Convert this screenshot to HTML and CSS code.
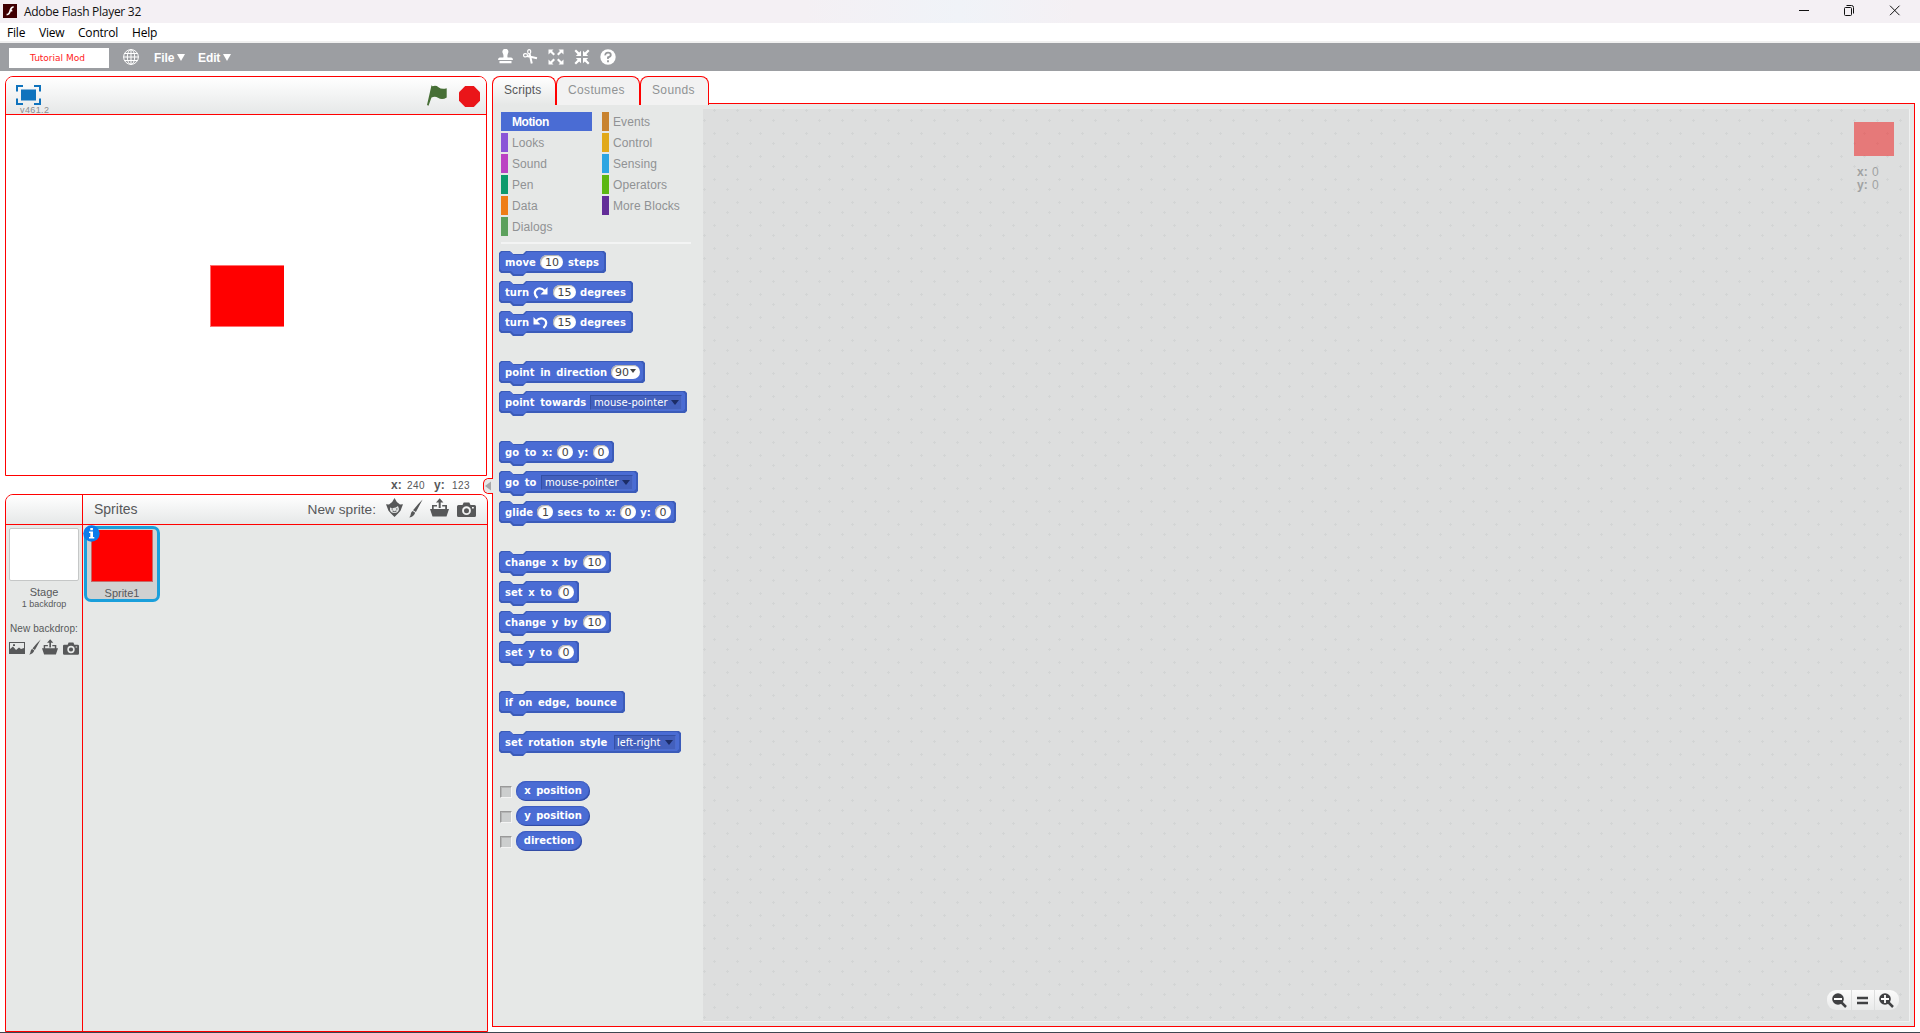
FILE: index.html
```html
<!DOCTYPE html>
<html lang="en">
<head>
<meta charset="utf-8">
<title>Adobe Flash Player 32</title>
<link rel="stylesheet" href="styles.css">
</head>
<body>
<svg class="defs" width="0" height="0" aria-hidden="true">
  <symbol id="brush" viewBox="0 0 14 19"><path d="M13.6.6 6.9 13 4.1 11.200Q9 5 13.6.6ZM3.7 12l2.500 1.700Q4.800 17.800.3 18.600 1.800 16.500 1.900 14.600 2.200 12.600 3.700 12Z"/></symbol>
  <symbol id="upload" viewBox="0 0 19 19"><path d="M2 16.500V7h5v1.600H3.700V11h11.500V8.600h-3V7H17v4h2l-2.500 7.500H2.500L0 11h2ZM8.700 10V4.500H6L9.700.3l3.700 4.200h-2.700V10Z"/></symbol>
  <symbol id="camera" viewBox="0 0 19 15"><path fill-rule="evenodd" d="M1.500 3h4l1.200-2.500h5.600L13.500 3h4Q19 3 19 4.500v9Q19 15 17.500 15h-16Q0 15 0 13.500v-9Q0 3 1.500 3ZM9.500 4.300a4.400 4.400 0 1 0 0 8.800 4.400 4.400 0 0 0 0-8.800Zm0 1.900a2.500 2.500 0 1 1 0 5 2.500 2.500 0 0 1 0-5ZM15 5h1.800v1.400H15Z"/></symbol>
</svg>

<header class="titlebar">
  <svg class="app-icon" width="14" height="14" viewBox="0 0 14 14"><rect width="14" height="14" fill="#400002"/><path d="M10.700 3Q8.200 2.800 7.300 6.400 6.300 10.600 3.600 10.700M6.500 6.600H9.300" fill="none" stroke="#fff" stroke-width="1.700"/></svg>
  <span class="app-title">Adobe Flash Player 32</span>
  <svg class="window-buttons" width="102" height="12" viewBox="0 0 102 12" fill="none" stroke="#111">
    <path d="M0 5.500h10"/><rect x="45.500" y="2.500" width="7" height="8" rx="1"/><path d="M47.500.5h5q2 0 2 2v6M91 .7l9.500 9.500M100.500.7 91 10.200"/>
  </svg>
</header>
<nav class="menubar"><span class="m1">File</span><span class="m2">View</span><span class="m3">Control</span><span class="m4">Help</span></nav>
<div class="toolbar">
  <div class="logo"><span>Tutorial Mod</span></div>
  <svg class="globe" width="16" height="16" viewBox="0 0 16 16" fill="none" stroke="#fff"><circle cx="8" cy="8" r="7.400"/><ellipse cx="8" cy="8" rx="3.700" ry="7.400"/><path d="M8 .6v14.800M.6 8h14.800M1.700 4.500h12.600M1.700 11.500h12.600"/></svg>
  <span class="tool-menu file">File<i></i></span>
  <span class="tool-menu edit">Edit<i></i></span>
  <div class="tools">
    <svg width="15" height="16" viewBox="0 0 15 16" fill="#fff"><path d="M5.300 8.600Q5.900 6.400 4.800 4.200A3 3 0 1 1 10 4.200Q9 6.400 9.600 8.600h3.600Q15 9 15 11H0Q0 9 1.700 8.600ZM1.500 12h12v2.300h-12Z"/></svg>
    <svg width="15" height="16" viewBox="0 0 15 16" fill="none" stroke="#fff"><ellipse cx="2.500" cy="6.300" rx="2" ry="1.600" stroke-width="1.200"/><ellipse cx="6.200" cy="2.700" rx="1.500" ry="2.100" stroke-width="1.200"/><path d="M4 7 14 9.300M6.600 4.600 8.800 14.500" stroke-width="2"/></svg>
    <svg width="16" height="16" viewBox="0 0 16 16"><path d="M.5.5h5L4 2l3 3-1.500 1.500-3-3L.5 5.500ZM15.500.5v5l-2-2-3 3L9 5l3-3L10.500.5ZM.5 15.500v-5l2 2 3-3L7 11l-3 3 1.500 1.500ZM15.500 15.500h-5L12 14l-3-3 1.500-1.500 3 3 2-2Z" fill="#fff"/></svg>
    <svg width="16" height="16" viewBox="0 0 16 16"><path d="M7 1.800V7H1.800l1.800-1.800L.5 2 2 .5l3.200 3.100ZM9 1.800V7h5.200l-1.800-1.800L15.500 2 14 .5l-3.200 3.100ZM7 14.200V9H1.800l1.800 1.800L.5 14 2 15.500l3.200-3.100ZM9 14.200V9h5.200l-1.800 1.800 3.100 3.200-1.500 1.500-3.200-3.100Z" fill="#fff"/></svg>
    <svg width="16" height="16" viewBox="0 0 16 16"><circle cx="8" cy="8" r="7.700" fill="#fff"/><path d="M5.300 6.400Q5.100 3.700 8 3.700q2.800 0 2.800 2.200Q10.800 7.500 8 8.300V10M8 11.200v2" fill="none" stroke="#96989b" stroke-width="1.800"/></svg>
  </div>
</div>

<main class="workspace">
  <section class="left">
    <div class="stage">
      <div class="stage-head">
        <svg class="fullscreen" width="25" height="20" viewBox="0 0 25 20"><path d="M1 6.500V1h6M18 1h6v5.500M24 13.500V19h-6M7 19H1v-5.500" fill="none" stroke="#0f73bd" stroke-width="2"/><rect x="5" y="4.500" width="15" height="11" fill="#0f73bd"/></svg>
        <span class="version">v461.2</span>
        <svg class="flag" width="20" height="21" viewBox="0 0 20 21"><path d="M5.500 1.300Q9 0 11.500 2.200 14.500 4.700 19.700 3.200V12.500Q15 15.400 11 12.700 8 10.700 4.500 12.500L1.500 20.700 0 20 4.500.3Z" fill="#476f36"/></svg>
        <svg class="stop" width="21" height="21" viewBox="0 0 21 21"><path d="M6.200 0h8.600L21 6.200v8.600L14.800 21H6.200L0 14.800V6.200Z" fill="#ea1519"/></svg>
      </div>
      <div class="stage-canvas"><div class="sprite"></div></div>
    </div>
    <div class="readout"><b>x:</b><span>240</span><b class="ry">y:</b><span>123</span></div>
    <div class="sprite-panel">
      <div class="panel-head">
        <div class="head-stage"></div>
        <div class="head-sprites">
          <span class="sprites-title">Sprites</span><span class="new-sprite">New sprite:</span>
          <svg class="imp" width="17" height="19" viewBox="0 0 17 19"><path fill="#575859" d="M8.500 0Q10 4 14 6.500L17 6.200 14.500 12.800 11.800 15.700 8.500 19l-3.300-3.300-2.700-2.900L0 6.200l3 .3Q7 4 8.500 0Z"/><path fill="#e4e6e6" d="M4 9.500q5 1.500 8-1.500l1 3q-.5 4-4.500 4T4 12Z"/><path d="M5.500 11h1.500m3 0h1.500M6.500 13q2 1.200 4 0" stroke="#575859" fill="none"/></svg>
          <svg class="h-brush" width="14" height="19"><use href="#brush"/></svg>
          <svg class="h-upload" width="19" height="19"><use href="#upload"/></svg>
          <svg class="h-camera" width="19" height="15"><use href="#camera"/></svg>
        </div>
      </div>
      <div class="panel-body">
        <aside class="stage-info">
          <div class="backdrop-thumb"></div>
          <span class="stage-name">Stage</span>
          <span class="backdrop-count">1 backdrop</span>
          <span class="new-backdrop">New backdrop:</span>
          <div class="backdrop-tools">
            <svg class="b-image" width="16" height="12" viewBox="0 0 16 12"><path fill-rule="evenodd" d="M0 0h16v12H0ZM1 1v6l3-2.500L7 8l3-2.500 2 1.500 3-1V1Zm3 1.200h2V4H4Z"/></svg>
            <svg class="b-brush" width="12" height="16" viewBox="0 0 14 19" preserveAspectRatio="none"><use href="#brush" width="14" height="19"/></svg>
            <svg class="b-upload" width="16" height="16"><use href="#upload"/></svg>
            <svg class="b-camera" width="16" height="13"><use href="#camera"/></svg>
          </div>
        </aside>
        <div class="sprite-list">
          <div class="sprite-card">
            <div class="sprite-thumb"></div><span>Sprite1</span>
            <svg class="info" width="17" height="17" viewBox="0 0 17 17"><circle cx="8.500" cy="8.500" r="8.200" fill="#0a7bea"/><path d="M7.300 3h2.600v2.200H7.300ZM6 6.500h4V12h1.300v1.500H6V12h1.300V8H6Z" fill="#fff"/></svg>
          </div>
        </div>
      </div>
    </div>
    <svg class="collapse" width="10" height="16" viewBox="0 0 10 16"><path d="M10 .5H4.500Q.5 1.500.5 5v6q0 3.500 4 4.500H10" fill="#e6e8e8" stroke="#f00"/><path d="M8 3.500v9L2 8Z" fill="#a5a7a9"/></svg>
  </section>

  <section class="editor">
    <div class="tabs"><div class="tab active">Scripts</div><div class="tab costumes">Costumes</div><div class="tab sounds">Sounds</div></div>
    <div class="editor-body">
      <aside class="palette">
        <div class="categories">
          <div class="cat motion">Motion</div><div class="cat events">Events</div>
          <div class="cat looks">Looks</div><div class="cat control">Control</div>
          <div class="cat sound">Sound</div><div class="cat sensing">Sensing</div>
          <div class="cat pen">Pen</div><div class="cat operators">Operators</div>
          <div class="cat data">Data</div><div class="cat more">More Blocks</div>
          <div class="cat dialogs">Dialogs</div>
        </div>
        <div class="blocks">
          <div class="block w107"><span>move</span><em class="two">10</em><span>steps</span></div>
          <div class="block w134"><span>turn</span><svg width="16" height="13" viewBox="0 0 16 13"><path d="M4.500 12Q0 7.500 3 4 7 .5 12 5" fill="none" stroke="#fff" stroke-width="2.200"/><path d="M14.500 1v7.500H7.500Z" fill="#fff"/></svg><em class="two">15</em><span>degrees</span></div>
          <div class="block w134"><span>turn</span><svg width="16" height="13" viewBox="0 0 16 13"><path d="M10.500 12Q15 7.500 12 4 8 .5 3 5" fill="none" stroke="#fff" stroke-width="2.200"/><path d="M.5 1v7.500h7Z" fill="#fff"/></svg><em class="two">15</em><span>degrees</span></div>
          <div class="block w146 gap"><span>point in direction</span><em class="angle">90<i></i></em></div>
          <div class="block w188"><span>point towards</span><strong class="drop pointer">mouse-pointer<i></i></strong></div>
          <div class="block w115 gap"><span>go to x:</span><em>0</em><span>y:</span><em>0</em></div>
          <div class="block w139"><span>go to</span><strong class="drop pointer">mouse-pointer<i></i></strong></div>
          <div class="block w177"><span>glide</span><em>1</em><span>secs to x:</span><em>0</em><span>y:</span><em>0</em></div>
          <div class="block w112 gap"><span>change x by</span><em class="two">10</em></div>
          <div class="block w80"><span>set x to</span><em>0</em></div>
          <div class="block w112"><span>change y by</span><em class="two">10</em></div>
          <div class="block w80"><span>set y to</span><em>0</em></div>
          <div class="block w126 gap"><span>if on edge, bounce</span></div>
          <div class="block w182 smallgap"><span>set rotation style</span><strong class="drop style">left-right<i></i></strong></div>
        </div>
        <div class="reporters">
          <div class="row"><i class="check"></i><span class="reporter">x position</span></div>
          <div class="row"><i class="check"></i><span class="reporter">y position</span></div>
          <div class="row"><i class="check"></i><span class="reporter dir">direction</span></div>
        </div>
      </aside>
      <div class="scripts">
        <svg class="grid" width="100%" height="100%"><defs><pattern id="plus" width="23" height="23" patternUnits="userSpaceOnUse"><path d="M0 11.500h3M1.500 10v3M10 1.500h3M11.500 0v3" stroke="#d3d5d5"/></pattern></defs><rect width="100%" height="100%" fill="url(#plus)"/></svg>
        <div class="watermark"><div class="mini-sprite"></div><div class="coords"><b>x:</b><span>0</span><b>y:</b><span>0</span></div></div>
        <div class="zoom-bar">
          <span><svg width="15" height="15" viewBox="0 0 15 15"><circle cx="6" cy="6" r="5.800" fill="#404143"/><path d="m9 9 5 5" stroke="#404143" stroke-width="2.500"/><path d="M2 6h8" stroke="#fff" stroke-width="1.800"/></svg></span>
          <span><svg width="11" height="15" viewBox="0 0 11 15"><path d="M0 5h11M0 10h11" stroke="#404143" stroke-width="2.600"/></svg></span>
          <span><svg width="15" height="15" viewBox="0 0 15 15"><circle cx="6" cy="6" r="5.800" fill="#404143"/><path d="m9 9 5 5" stroke="#404143" stroke-width="2.500"/><path d="M2 6h8M6 2v8" stroke="#fff" stroke-width="1.800"/></svg></span>
        </div>
      </div>
    </div>
  </section>
</main>
</body>
</html>
```
FILE: styles.css
```css
* { box-sizing: border-box; }
body { margin: 0; width: 1920px; height: 1033px; overflow: hidden; background: #fff; border-bottom: 1px solid #3c4650; font: 12px "Liberation Sans", Arial, sans-serif; color: #57585a; display: flex; flex-direction: column; }
svg { display: block; flex: none; }
.defs { position: absolute; }
span, b { white-space: nowrap; }

.titlebar { height: 23px; flex: none; background: linear-gradient(90deg, #f4f0f4 42%, #f0f3f8 50%, #f4f0f4 56%); display: flex; align-items: center; padding: 0 21px 2px 3px; font-family: "Open Sans", "Noto Sans", sans-serif; color: #111; }
.app-title { margin: 2px auto 0 7px; letter-spacing: -.28px; }
.window-buttons { margin: 0 -2px 0 0; }
.menubar { height: 20px; flex: none; border-bottom: 2px solid #f0f0f0; display: flex; padding-left: 7px; line-height: 20px; font-family: "Open Sans", "Noto Sans", sans-serif; color: #000; }
.m1 { width: 32px; } .m2 { width: 39px; } .m3 { width: 54px; }
.m1, .m2, .m3, .m4 { letter-spacing: -.2px; }
.toolbar { height: 28px; flex: none; background: #9c9ea2; display: flex; align-items: center; padding-left: 9px; color: #fff; font-weight: bold; }
.logo { width: 100px; height: 20px; margin-top: 1px; background: #fff; color: #f22; font: 9px/20px "DejaVu Sans", sans-serif; padding-left: 21px; }
.globe { margin: 0 15px 0 14px; }
.tool-menu { margin-top: 1px; }
.tool-menu i { display: inline-block; border: 4px solid transparent; border-top: 7px solid #fff; border-bottom: 0; margin-left: 3px; vertical-align: 1px; }
.file { width: 44px; letter-spacing: -.1px; } .edit { width: 299px; letter-spacing: -.1px; }
.tools { display: flex; gap: 10px; margin-left: 1px; }

.workspace { display: flex; flex: 1; padding: 5px 0 0 5px; }
.left { width: 487px; position: relative; flex: none; }
.stage { width: 482px; height: 400px; border: 1px solid #f00; border-radius: 8px 8px 0 0; overflow: hidden; }
.stage-head { height: 38px; border-bottom: 1px solid #f00; background: linear-gradient(#fff, #e6e8e8); display: flex; position: relative; padding: 8px 6px 0 10px; }
.version { position: absolute; left: 14px; top: 28px; font-size: 9px; line-height: 11px; letter-spacing: .4px; color: #8b8d8f; }
.flag { margin: 0 12px 0 auto; }
.stop { margin-top: 1px; }
.stage-canvas { height: 360px; padding: 150px 0 0 204px; }
.sprite { width: 74px; height: 62px; background: #f00; border: 1px solid #ff7070; border-right: 0; }
.readout { height: 18px; display: flex; align-items: center; padding: 0 0 0 386px; font-size: 11px; }
.readout b { width: 16px; font-size: 12px; } .readout span { width: 27px; font-size: 10px; letter-spacing: .4px; padding-top: 1px; }
.readout .ry { width: 18px; }
.sprite-panel { width: 483px; height: 538px; border: 1px solid #f00; border-radius: 8px 8px 0 0; overflow: hidden; background: #e6e8e7; display: flex; flex-direction: column; }
.panel-head { height: 30px; display: flex; border-bottom: 1px solid #f00; background: linear-gradient(#fff, #e6e8e8); }
.head-stage { width: 77px; border-right: 1px solid #f00; }
.head-sprites { flex: 1; display: flex; padding: 4px 9px 0 11px; fill: #575859; font-size: 14px; line-height: 20px; }
.sprites-title { margin-right: auto; }
.new-sprite { margin: 1px 10px 0 0; font-size: 13.700px; }
.imp { margin-top: -1px; }
.h-brush { margin: 0 7px 0 6px; } .h-upload { margin: -1px 8px 0 0; } .h-camera { margin-top: 3px; margin-right: 2px; }
.panel-body { flex: 1; display: flex; }
.stage-info { width: 77px; border-right: 1px solid #f00; display: flex; flex-direction: column; align-items: center; padding-top: 3px; }
.backdrop-thumb { width: 70px; height: 53px; background: #fff; border: 1px solid #c5c7c7; border-radius: 2px; }
.stage-name { margin-top: 5px; line-height: 13px; font-size: 11px; }
.backdrop-count { font-size: 9px; line-height: 10px; }
.new-backdrop { margin-top: 14px; font-size: 10px; line-height: 12px; letter-spacing: .1px; }
.backdrop-tools { display: flex; fill: #575859; margin: 4px 0 0 0; width: 70px; align-items: center; }
.b-image { margin-top: 1px; } .b-brush { margin: 0 1px 0 4px; } .b-camera { margin: 2px 0 0 5px; }
.sprite-list { padding: 1px; }
.sprite-card { position: relative; width: 76px; height: 76px; border: 3px solid #1a9fdb; border-radius: 7px; background: #d0d1d1; display: flex; flex-direction: column; align-items: center; font-size: 11px; }
.sprite-thumb { width: 62px; height: 52px; margin: 1px 0 5px; background: #f00; border: 1px solid #c86868; border-top: 0; }
.info { position: absolute; left: -4px; top: -4px; }
.collapse { position: absolute; left: 478px; top: 402px; }

.editor { width: 1423px; }
.tabs { display: flex; height: 28px; position: relative; z-index: 1; font-size: 12px; color: #909294; }
.tab { height: 29px; border: 1px solid #f00; border-bottom: 0; border-radius: 8px 8px 0 0; background: #f2f2f2; padding: 6px 0 0 11px; width: 84px; letter-spacing: .35px; }
.tab.active { width: 64px; letter-spacing: .1px; background: linear-gradient(#fff, #e6e8e7); color: #57585a; }
.tab.sounds { width: 69px; }
.editor-body { margin-top: -1px; height: 924px; border: 1px solid #f00; background: #e6e8e7; padding: 5px 4px 4px 0; display: flex; }
.palette { width: 210px; padding-top: 1px; }
.categories { display: grid; grid-template-columns: 91px 91px; column-gap: 10px; row-gap: 2px; margin: 2px 12px 0 8px; padding-bottom: 6px; border-bottom: 2px solid #f3f4f4; }
.cat { height: 19px; line-height: 20px; border-left: 7px solid; padding-left: 4px; color: #909294; letter-spacing: .08px; }
.motion { background: #4a6cd4; border-color: #4a6cd4; color: #fff; font-weight: bold; letter-spacing: -.4px; }
.looks { border-color: #8a55d7; } .sound { border-color: #bb42c3; } .pen { border-color: #0e9a6c; } .data { border-color: #ee7d16; } .dialogs { border-color: #5ca05c; }
.events { border-color: #c88330; } .control { border-color: #e1a91a; } .sensing { border-color: #2ca5e2; } .operators { border-color: #5cb712; } .more { border-color: #632d99; }

.blocks { margin: 7px 0 0 6px; font: bold 10px "DejaVu Sans", sans-serif; color: #fff; }
.block { position: relative; z-index: 0; height: 25px; margin-bottom: 5px; padding: 0 6px 3px; display: flex; align-items: center; justify-content: space-between; word-spacing: 2px; letter-spacing: .05px; }
.block::before, .block::after { content: ""; position: absolute; z-index: -1; clip-path: polygon(0 2px, 2px 0, 11px 0, 14px 3px, 24px 3px, 27px 0, calc(100% - 2px) 0, 100% 2px, 100% calc(100% - 5px), calc(100% - 2px) calc(100% - 3px), 27px calc(100% - 3px), 24px 100%, 14px 100%, 11px calc(100% - 3px), 2px calc(100% - 3px), 0 calc(100% - 5px)); }
.block::before { inset: 0; background: #3b5bb9; }
.block::after { inset: 1px 2px 2px 1px; background: #4a6cd4; }
.gap { margin-top: 25px; } .smallgap { margin-top: 15px; }
.w107 { width: 107px; } .w134 { width: 134px; } .w146 { width: 146px; } .w188 { width: 188px; } .w115 { width: 115px; } .w139 { width: 139px; } .w177 { width: 177px; } .w112 { width: 112px; } .w80 { width: 80px; } .w126 { width: 126px; } .w182 { width: 182px; }
.block em { font-style: normal; font-weight: normal; font-size: 11px; letter-spacing: 0; width: 16px; height: 14px; line-height: 15px; border-radius: 7px; background: #fff; color: #444; text-align: center; box-shadow: inset 1px 1px 1px #aaa; }
.block em:last-child { margin-right: -1px; }
.block em.two { width: 23px; }
.block em.angle { width: 29px; text-align: left; padding-left: 4px; }
.block i { display: inline-block; border: 4px solid transparent; border-top: 5px solid #1c2c66; border-bottom: 0; }
.block .angle i { border-width: 4px 3px 0; border-top-color: #444; margin-left: 1px; vertical-align: 3px; }
.w107 span:last-child, .w134 span:last-child { margin-right: 1px; }
.drop { height: 15px; line-height: 15px; font-weight: normal; font-size: 10px; background: #4360bd; border: 1px solid #3450a5; border-right-color: #4d6ccc; border-bottom-color: #4d6ccc; padding-left: 3px; display: flex; align-items: center; justify-content: space-between; padding-right: 2px; margin-right: -1px; }
.pointer { width: 92px; } .style { width: 62px; padding-left: 2px; font-family: "Noto Sans", sans-serif; font-size: 10.500px; letter-spacing: 0; }
.reporters { margin: 25px 0 0 6px; display: flex; flex-direction: column; gap: 5px; font: bold 10px/19px "DejaVu Sans", sans-serif; color: #fff; }
.row { display: flex; align-items: center; }
.check { width: 12px; height: 12px; margin: 1px 4px 0 1px; background: #cccece; border: 1px solid; border-color: #999 #f4f4f4 #f4f4f4 #999; box-shadow: inset 1px 1px #b4b5b5; }
.reporter { width: 74px; height: 20px; border-radius: 10px; background: #4a6cd4; text-align: center; word-spacing: 2px; box-shadow: inset -1px -1px 1px #3049a0, inset 1px 1px 1px #3d5dc0; }
.reporter.dir { width: 66px; }

.scripts { position: relative; flex: 1; background: #dddede; border-right: 1px solid #f0f1f1; border-bottom: 1px solid #f0f1f1; }
.grid { position: absolute; inset: 0; }
.watermark { position: absolute; right: 15px; top: 13px; width: 40px; }
.mini-sprite { height: 34px; background: rgba(240, 20, 20, .5); }
.coords { display: grid; grid-template-columns: 15px 10px; margin: 10px 0 0 3px; line-height: 13px; color: #a0a2a2; }
.zoom-bar { position: absolute; right: 10px; bottom: 11px; display: flex; gap: 1px; width: 72px; height: 20px; border-radius: 9px; overflow: hidden; }
.zoom-bar span { flex: 1; display: flex; justify-content: center; align-items: center; background: linear-gradient(#fbfbfb, #e9eaea); }
.zoom-bar span:first-child { padding-left: 2px; }
.zoom-bar span:nth-child(2) { padding-right: 1px; }
.zoom-bar span:last-child { padding-right: 2px; }
```
